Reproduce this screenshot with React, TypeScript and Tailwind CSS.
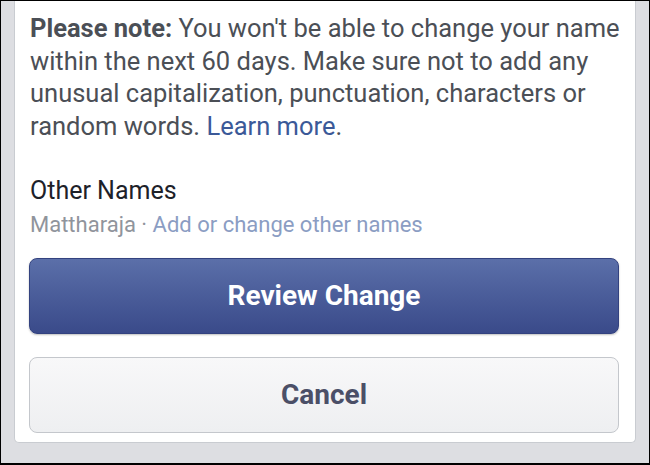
export default function App() {
  return (
    <div className="flex h-[465px] w-[650px] flex-col border-x border-t border-b-2 border-black bg-[#dddee2] px-[13px] pb-[20px] font-['Roboto','Liberation_Sans',sans-serif]">
      <div className="flex flex-1 flex-col rounded-b-[5px] border-x border-b border-[#c9ccd1] bg-white px-[15px] pt-[11px]">
        {/* lines broken as in the app */}
        <p className="whitespace-nowrap text-[25.5px] leading-[32.5px] text-[#4b4f56]">
          <span className="font-bold">Please note:</span> You won't be able to change your name
          <br />
          within the next 60 days. Make sure not to add any
          <br />
          unusual capitalization, punctuation, characters or
          <br />
          random words. <span className="text-[#3b5998]">Learn more</span>.
        </p>

        <div className="mt-[34px] text-[25px] leading-[30px] text-[#1d2129]">Other Names</div>
        <div className="mt-[6px] text-[22px] leading-[26px] text-[#90949c]">
          Mattharaja · <span className="text-[#8b9dc3]">Add or change other names</span>
        </div>

        <div className="-ml-px mt-[20px] flex flex-col gap-[23px]">
          <button className="h-[76px] w-[590px] rounded-[8px] border border-[#33427f] bg-gradient-to-b from-[#5b6fa9] to-[#3a4a8a] text-[28px] font-bold text-white shadow-[0_1px_2px_rgba(0,0,0,0.25)]">
            Review Change
          </button>
          <button className="h-[76px] w-[590px] rounded-[8px] border border-[#c4c7cc] bg-gradient-to-b from-[#f8f8f9] to-[#eeeff1] text-[28px] font-bold text-[#4b4f67]">
            Cancel
          </button>
        </div>
      </div>
    </div>
  );
}
